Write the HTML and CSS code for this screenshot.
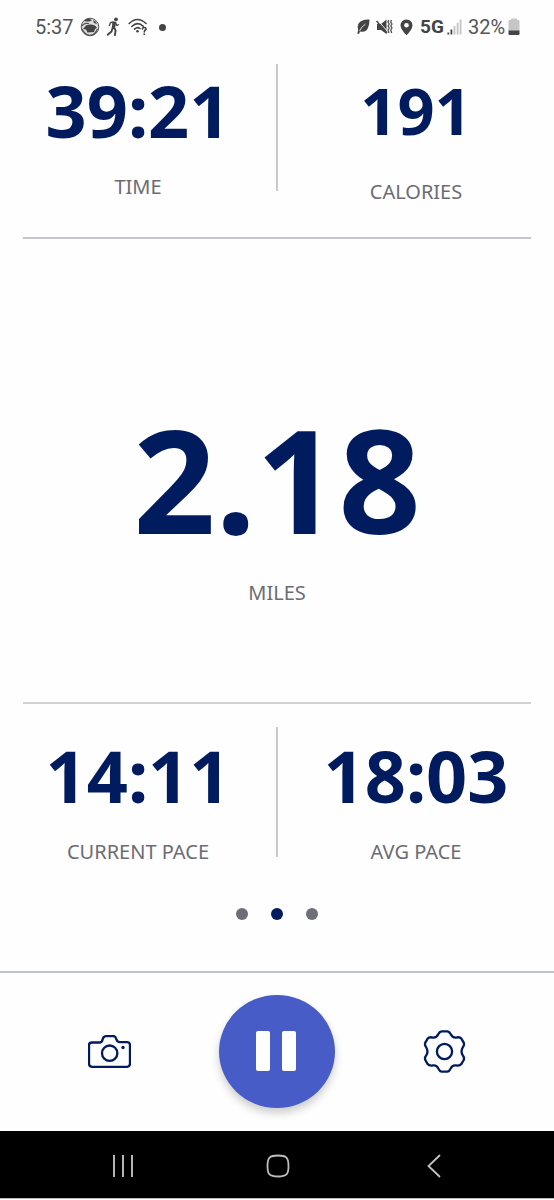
FILE: index.html
```html
<!doctype html>
<html lang="en">
  <head>
    <meta charset="UTF-8" />
    <meta name="viewport" content="width=device-width, initial-scale=1.0" />
    <title>Workout</title>
    <link rel="stylesheet" href="styles.css">
  </head>
  <body>
    <div class="status-bar">
      <span class="clock">5:37</span>
      <svg class="icon-ball" viewBox="0 0 20 20" width="20" height="20">
        <circle cx="10" cy="10" r="8.8" fill="#ddd" stroke="#555" stroke-width="1" />
        <path d="M4 4Q7 1 10 2L12 3.500 9 4.500 6 4.500ZM13 3Q16 4 17 7L14 6ZM6 8.500Q10 6.500 15 8.500L17 11 15 12 14 15 7.500 15.500 6 12.500 3 12Z" fill="#444" />
        <path d="M2 9Q4 5.500 9 6.500M2 12Q5 18 10 18.300Q15 18 17.500 12" fill="none" stroke="#555" stroke-width="1.200" />
      </svg>
      <svg class="icon-runner" viewBox="0 0 14 20" width="14" height="20">
        <circle cx="10" cy="2.300" r="1.900" fill="#444" />
        <path d="M6.500 4.500L10.300 4.800 9 11 5.800 11Z" fill="#444" />
        <path d="M8 10.500L9.600 13.500 8.800 18.800M6.800 10.500L5.500 14.500 1.200 18.300" fill="none" stroke="#444" stroke-width="1.900" stroke-linejoin="round" />
        <path d="M7.500 5L4.500 5.500 3.200 9M9.500 5.500L10.800 8.500 13 7.500" fill="none" stroke="#444" stroke-width="1.300" />
      </svg>
      <svg class="icon-wifi" viewBox="0 0 20 18" width="20" height="18">
        <g fill="none" stroke="#444" stroke-width="1.600" stroke-linecap="round">
          <path d="M1.200 5.500Q9.500-2.500 18 5.500" />
          <path d="M3.800 8.500Q9.500 3 15.300 8.300" />
          <path d="M6.500 11.200Q9.500 8.500 12 10.500" />
          <path d="M14.300 11Q14.700 9.400 16.300 9.500Q18.300 9.700 17.900 11.500Q16.200 12.800 16.200 14" />
        </g>
        <circle cx="9.500" cy="13.300" r="1.300" fill="#444" />
        <circle cx="16.200" cy="16.200" r=".9" fill="#444" />
      </svg>
      <span class="more-dot"></span>

      <div class="status-right">
        <svg class="icon-leaf" viewBox="0 0 13 16" width="13" height="16">
          <path d="M12.500 .5Q4 0 1.300 5Q0 8 1.200 11L.3 14.500 2 15 3 12.500Q8.500 14 11 9Q12.500 6 12.500 .5Z" fill="#444" />
          <path d="M2.500 12Q4 8 8.500 5" fill="none" stroke="#fff" stroke-width=".8" />
        </svg>
        <svg class="icon-mute" viewBox="0 0 17 16" width="17" height="16">
          <path d="M1 5H5L10.500 .5V15L5 11H1Z" fill="#444" />
          <path d="M1.500 1.200L11.500 12.300" stroke="#fff" stroke-width="1" />
          <path d="M.5 2L11 14" stroke="#444" stroke-width="1.500" />
          <path d="M12.800 1L11.900 3 13.300 5 12 7 13.300 9 12 11 13 14M15.500 1L14.600 3 16 5 14.700 7 16 9 14.700 11 15.700 14" fill="none" stroke="#444" stroke-width="1.200" />
        </svg>
        <svg class="icon-pin" viewBox="0 0 13 17" width="13" height="17">
          <path d="M6.500 .5Q12.300 .8 12.500 6.500Q12.200 10.500 6.500 16.300Q.8 10.500 .5 6.500Q.7 .8 6.500 .5Z" fill="#444" />
          <circle cx="6.500" cy="6.300" r="2.300" fill="#fff" />
        </svg>
        <span class="network">5G</span>
        <svg class="icon-signal" viewBox="0 0 15 16" width="15" height="16">
          <path d="M.4 13.500h1.800v2H.4zM3.500 10.500h1.800v5H3.500z" fill="#444" />
          <path d="M6.600 7h1.800v8.500H6.600zM9.700 3.700h1.800v11.800H9.700zM12.700 .5h1.800v15h-1.800z" fill="#c4c4c4" />
        </svg>
        <span class="percent">32%</span>
        <svg class="icon-battery" viewBox="0 0 12 18" width="12" height="18">
          <path d="M3 2V.5H9V2H10.500Q11.500 2 11.500 3V13H.5V3Q.5 2 1.500 2Z" fill="#c6c6c6" />
          <path d="M.5 12.500H11.500V16Q11.500 17 10.500 17H1.500Q.5 17 .5 16Z" fill="#444" />
        </svg>
      </div>
    </div>

    <div class="stats">
      <div class="row row-top">
        <div class="stat">
          <div class="value">39:21</div>
          <div class="label">TIME</div>
        </div>
        <div class="divider"></div>
        <div class="stat">
          <div class="value value-small">191</div>
          <div class="label label-low">CALORIES</div>
        </div>
      </div>

      <div class="distance">
        <div class="value value-big">2.18</div>
        <div class="label">MILES</div>
      </div>

      <div class="row row-pace">
        <div class="stat">
          <div class="value">14:11</div>
          <div class="label">CURRENT PACE</div>
        </div>
        <div class="divider"></div>
        <div class="stat">
          <div class="value">18:03</div>
          <div class="label">AVG PACE</div>
        </div>
      </div>

      <div class="pager">
        <span class="dot"></span>
        <span class="dot active"></span>
        <span class="dot"></span>
      </div>
    </div>

    <div class="controls">
      <svg class="icon-camera" viewBox="54 45 129 98" width="43" height="33">
        <g fill="none" stroke="#001c5f" stroke-width="7">
          <path d="M66 67H90Q96 66 98 57Q100 49 107 48H132Q137 49 139 57Q142 66 149 66H172Q180 67 180 75V130Q180 139 172 140H66Q57 139 57 131V75Q57 67 66 67Z" />
          <circle cx="119" cy="99" r="23" />
        </g>
        <circle cx="159" cy="82" r="5" fill="#001c5f" />
      </svg>
      <button class="pause" aria-label="Pause">
        <span class="bar"></span>
        <span class="bar"></span>
      </button>
      <svg class="icon-gear" viewBox="52 44 130 130" width="43" height="43">
        <g fill="none" stroke="#001c5f" stroke-width="7">
          <path d="M108 48H126Q132 49 136 57Q141 68 152 67Q163 64 168 70L175 82Q178 89 172 97Q165 109 172 120Q178 128 175 135L168 147Q163 153 152 151Q141 149 136 160Q132 169 126 170H108Q102 169 98 160Q93 149 82 151Q71 153 66 147L59 135Q56 128 62 120Q69 109 62 97Q56 89 59 82L66 70Q71 64 82 67Q93 68 98 57Q102 49 108 48Z" />
          <circle cx="117" cy="109" r="23" />
        </g>
      </svg>
    </div>

    <div class="nav-bar">
      <svg class="nav-recent" viewBox="0 0 22 24" width="22" height="24">
        <path d="M2 1V23M11 1V23M20 1V23" stroke="#b5b5b5" stroke-width="2" />
      </svg>
      <svg class="nav-home" viewBox="0 0 24 24" width="24" height="24">
        <path d="M12 1.500C20.500 1.500 22.500 3.500 22.500 12S20.500 22.500 12 22.500 1.500 20.500 1.500 12 3.500 1.500 12 1.500Z" fill="none" stroke="#bdbdbd" stroke-width="1.800" />
      </svg>
      <svg class="nav-back" viewBox="0 0 14 24" width="14" height="24">
        <path d="M13 1L1.500 12 13 23" fill="none" stroke="#c4c4c4" stroke-width="1.800" />
      </svg>
    </div>
  </body>
</html>
```
FILE: styles.css
```css
* {
  box-sizing: border-box;
}
body {
  margin: 0;
  width: 554px;
  height: 1200px;
  display: flex;
  flex-direction: column;
  overflow: hidden;
  background: #fefefe;
  font-family: "Noto Sans", sans-serif;
}
svg {
  display: block;
  flex: none;
}
.status-bar {
  display: flex;
  align-items: center;
  height: 54px;
  padding: 0 34px 0 35px;
  color: #555;
  font-family: Roboto, sans-serif;
  font-size: 20px;
  line-height: 24px;
}
.clock {
  width: 45px;
}
.icon-runner {
  margin-left: 6px;
}
.icon-wifi {
  margin-left: 8px;
}
.more-dot {
  width: 7px;
  height: 7px;
  margin-left: 11px;
  border-radius: 50%;
  background: #444;
}
.status-right {
  display: flex;
  align-items: center;
  margin-left: auto;
}
.icon-mute {
  margin-left: 6px;
}
.icon-pin {
  margin-left: 7px;
}
.network {
  margin-left: 7px;
  width: 27px;
  color: #444;
  font-size: 19px;
  font-weight: bold;
}
.percent {
  width: 40px;
  margin-left: 6px;
}
.stats {
  height: 917px;
}
.row {
  display: grid;
  grid-template-columns: 1fr 2px 1fr;
}
.row-top {
  height: 183px;
  padding-top: 10px;
}
.row-pace {
  height: 155px;
  padding-top: 23px;
}
.divider {
  height: 127px;
  background: #c8c8cd;
}
.row-pace .divider {
  height: 130px;
}
.stat {
  padding-top: 10px;
  text-align: center;
}
.row-pace .stat {
  padding-top: 12px;
}
.value {
  color: #001c5f;
  font-size: 72px;
  font-weight: bold;
  line-height: 72px;
  white-space: nowrap;
}
.value-small {
  font-size: 65px;
}
.value-big {
  font-size: 144px;
  line-height: 144px;
}
.label {
  margin-top: 29px;
  color: #6c6c74;
  font-size: 20px;
  line-height: 24px;
}
.label-low {
  margin-top: 34px;
}
.distance {
  height: 467px;
  margin: 0 23px;
  padding-top: 167px;
  border-top: 2px solid #c5c5cd;
  border-bottom: 2px solid #d2d2d6;
  text-align: center;
}
.distance .label {
  margin-top: 31px;
}
.pager {
  display: flex;
  justify-content: center;
  gap: 23px;
  padding-top: 49px;
}
.dot {
  width: 12px;
  height: 12px;
  border-radius: 50%;
  background: #6e6e78;
}
.dot.active {
  background: #001c5f;
}
.controls {
  display: flex;
  align-items: center;
  height: 160px;
  padding: 0 88px 2px;
  border-top: 2px solid #c0c4cf;
}
.pause {
  display: flex;
  align-items: center;
  justify-content: center;
  gap: 12px;
  width: 116px;
  height: 113px;
  margin: 0 88px;
  padding: 0 2px 0 0;
  border: none;
  border-radius: 50%;
  background: #475cc7;
  box-shadow: 0 5px 9px rgba(0, 0, 0, 0.2);
  flex: none;
}
.bar {
  width: 14px;
  height: 40px;
  border-radius: 2px;
  background: #fff;
}
.nav-bar {
  display: flex;
  align-items: center;
  height: 68px;
  padding: 3px 0 0 112px;
  border-bottom: 1px solid #bbb;
  background: #000;
}
.nav-home {
  margin-left: 132px;
}
.nav-back {
  margin-left: 137px;
}
```
